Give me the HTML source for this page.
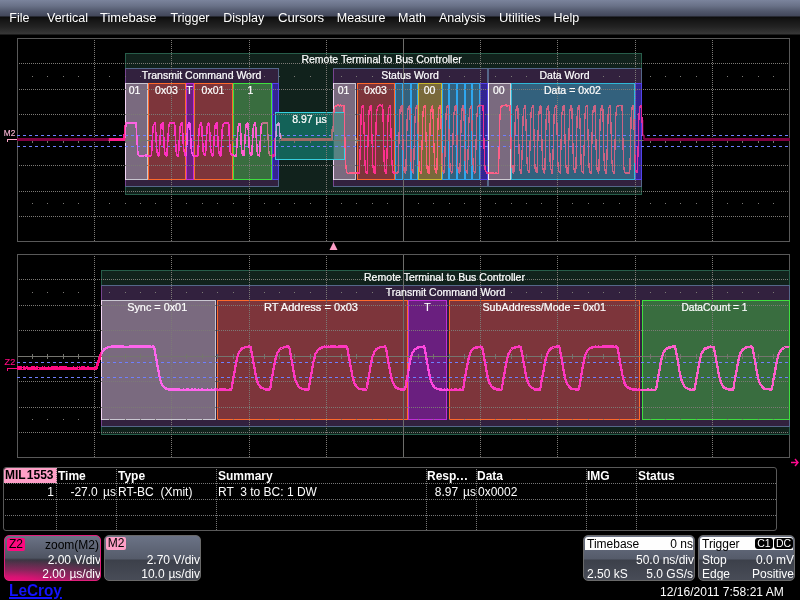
<!DOCTYPE html>
<html><head><meta charset="utf-8"><title>MIL-1553 decode</title>
<style>
html,body{margin:0;padding:0;background:#000;}
body{width:800px;height:600px;overflow:hidden;position:relative;font-family:"Liberation Sans", Arial, sans-serif;color:#fff;}
#all{position:absolute;left:0;top:0;width:800px;height:600px;will-change:transform;opacity:0.999;}
#menu{position:absolute;left:0;top:0;width:800px;height:35px;
 background:linear-gradient(to bottom,#7c859d 0px,#6a7288 6px,#535a6e 11px,#42475a 16.4px,#0d0d0d 16.6px,#161616 20px,#242424 27px,#3a3a3a 34.4px,#000 34.6px);}
#menu span{position:absolute;top:9.5px;font-size:12.5px;line-height:16px;color:#fff;white-space:nowrap;transform-origin:0 50%;}
#scope{position:absolute;left:0;top:0;width:800px;height:600px;}
#scope text{font-family:"Liberation Sans", Arial, sans-serif;}
#scope text.w{stroke:#fff;stroke-width:0.22px;}
#tbl{position:absolute;left:3px;top:467px;width:772px;height:62px;border:1px solid #5a5a5a;border-radius:3px;}
#tbl .h{position:absolute;top:1px;font-weight:bold;font-size:12px;line-height:14px;white-space:nowrap;}
#tbl .c{position:absolute;top:17px;font-size:12px;line-height:14px;white-space:pre;}
#tbl .vs{position:absolute;top:1px;width:1px;height:61px;background:repeating-linear-gradient(to bottom,#777 0 1px,transparent 1px 2px);}
#tbl .hs{position:absolute;left:1px;width:771px;height:1px;background:repeating-linear-gradient(to right,#777 0 1px,transparent 1px 2px);}
#mil{position:absolute;left:0;top:0;width:53px;height:15px;background:#ffa0c8;color:#000;font-weight:bold;font-size:12px;line-height:15px;border-top-left-radius:3px;white-space:nowrap;}
.box{position:absolute;top:535px;height:44px;border:1px solid #6a6a6a;border-radius:5px;overflow:hidden;font-size:12px;}
.box div{position:absolute;white-space:nowrap;line-height:14px;}
.r{text-align:right;}
#date{position:absolute;left:659.5px;top:584.5px;font-size:12px;line-height:14px;white-space:nowrap;transform:scaleX(1.005);transform-origin:0 0;}
#logo{position:absolute;left:8.8px;top:581.6px;font-size:16.6px;line-height:18px;font-weight:bold;color:#1414ff;text-decoration:underline;text-decoration-thickness:1.6px;text-underline-offset:1.2px;transform:scaleX(0.925);transform-origin:0 0;}
</style></head><body><div id="all">
<div id="menu"><span style="left:9.3px">File</span><span style="left:47px">Vertical</span><span style="left:100px;transform:scaleX(1.04)">Timebase</span><span style="left:170.4px">Trigger</span><span style="left:223.2px">Display</span><span style="left:277.6px;transform:scaleX(1.055)">Cursors</span><span style="left:336.8px">Measure</span><span style="left:398.1px">Math</span><span style="left:439px">Analysis</span><span style="left:498.8px;transform:scaleX(1.035)">Utilities</span><span style="left:553.6px">Help</span></div>
<svg id="scope" width="800" height="600" viewBox="0 0 800 600">
<g shape-rendering="crispEdges">
<rect x="17.5" y="38.5" width="772" height="203" fill="none" stroke="#5a5a5a" />
<rect x="125.5" y="53.5" width="516" height="141" fill="#12231d" stroke="#285e4b" />
<rect x="125.5" y="68.5" width="153" height="118" fill="#33223f" stroke="#56688a" />
<path d="M125.5,69V186" fill="none" stroke="#784690"/>
<rect x="333.5" y="68.5" width="154" height="118" fill="#33223f" stroke="#56688a" />
<path d="M333.5,69V186" fill="none" stroke="#784690"/>
<rect x="488.5" y="68.5" width="153" height="118" fill="#33223f" stroke="#56688a" />
<rect x="125" y="83" width="23" height="97" fill="#7b6b80"/>
<path d="M126,83.5H147.5V179.5H126" fill="none" stroke="#cac8d2"/>
<path d="M125.5,83V180" fill="none" stroke="#f4d6f6"/>
<rect x="148.5" y="83.5" width="37" height="96" fill="#7e363c" stroke="#ff6a2c" />
<rect x="186.5" y="83.5" width="7" height="96" fill="#6b2080" stroke="#c030d8" />
<rect x="194.5" y="83.5" width="38" height="96" fill="#7e363c" stroke="#ff6a2c" />
<rect x="233.5" y="83.5" width="38" height="96" fill="#3a6e40" stroke="#40e040" />
<rect x="272.5" y="83.5" width="6" height="96" fill="#342692" stroke="#5444ec" />
<rect x="333" y="83" width="23" height="97" fill="#7b6b80"/>
<path d="M334,83.5H355.5V179.5H334" fill="none" stroke="#cac8d2"/>
<path d="M333.5,83V180" fill="none" stroke="#f4d6f6"/>
<rect x="357.5" y="83.5" width="37" height="96" fill="#7e363c" stroke="#ff6a2c" />
<rect x="395.5" y="83.5" width="7" height="96" fill="#34627e" stroke="#30a8f0" />
<rect x="403.5" y="83.5" width="7" height="96" fill="#34627e" stroke="#30a8f0" />
<rect x="411.5" y="83.5" width="6" height="96" fill="#34627e" stroke="#30a8f0" />
<rect x="418.5" y="83.5" width="23" height="96" fill="#7a6a3c" stroke="#c8b830" />
<rect x="442.5" y="83.5" width="6" height="96" fill="#34627e" stroke="#30a8f0" />
<rect x="449.5" y="83.5" width="7" height="96" fill="#34627e" stroke="#30a8f0" />
<rect x="457.5" y="83.5" width="7" height="96" fill="#34627e" stroke="#30a8f0" />
<rect x="465.5" y="83.5" width="6" height="96" fill="#34627e" stroke="#30a8f0" />
<rect x="472.5" y="83.5" width="7" height="96" fill="#34627e" stroke="#30a8f0" />
<rect x="480.5" y="83.5" width="7" height="96" fill="#342692" stroke="#5444ec" />
<rect x="488" y="83" width="23" height="97" fill="#7b6b80"/>
<path d="M489,83.5H510.5V179.5H489" fill="none" stroke="#d0ccd4"/>
<path d="M488.5,83V180" fill="none" stroke="#f4f0f6"/>
<rect x="511.5" y="83.5" width="123" height="96" fill="#34627e" stroke="#30b8d8" />
<rect x="635.5" y="83.5" width="6" height="96" fill="#342692" stroke="#5444ec" />
<rect x="275.5" y="112.5" width="69" height="47" fill="#14685e" stroke="#38d0e0" fill-opacity="0.93"/>
<rect x="334" y="113" width="10" height="46" fill="#8a9aa4" fill-opacity="0.55"/>
<g>
<line x1="94.5" y1="40" x2="94.5" y2="241" stroke="#7d7b77" stroke-dasharray="1,1" />
<line x1="171.5" y1="40" x2="171.5" y2="241" stroke="#7d7b77" stroke-dasharray="1,1" />
<line x1="249.5" y1="40" x2="249.5" y2="241" stroke="#7d7b77" stroke-dasharray="1,1" />
<line x1="326.5" y1="40" x2="326.5" y2="241" stroke="#7d7b77" stroke-dasharray="1,1" />
<line x1="480.5" y1="40" x2="480.5" y2="241" stroke="#7d7b77" stroke-dasharray="1,1" />
<line x1="557.5" y1="40" x2="557.5" y2="241" stroke="#7d7b77" stroke-dasharray="1,1" />
<line x1="635.5" y1="40" x2="635.5" y2="241" stroke="#7d7b77" stroke-dasharray="1,1" />
<line x1="712.5" y1="40" x2="712.5" y2="241" stroke="#7d7b77" stroke-dasharray="1,1" />
<line x1="19" y1="63.5" x2="789" y2="63.5" stroke="#7d7b77" stroke-dasharray="1,1" />
<line x1="19" y1="89.5" x2="789" y2="89.5" stroke="#7d7b77" stroke-dasharray="1,1" />
<line x1="19" y1="114.5" x2="789" y2="114.5" stroke="#7d7b77" stroke-dasharray="1,1" />
<line x1="19" y1="165.5" x2="789" y2="165.5" stroke="#7d7b77" stroke-dasharray="1,1" />
<line x1="19" y1="191.5" x2="789" y2="191.5" stroke="#7d7b77" stroke-dasharray="1,1" />
<line x1="19" y1="216.5" x2="789" y2="216.5" stroke="#7d7b77" stroke-dasharray="1,1" />
</g>
<line x1="403.5" y1="39" x2="403.5" y2="241" stroke="#6e6e6b" />
<line x1="18" y1="140.5" x2="789" y2="140.5" stroke="#767670" />
<line x1="32.5" y1="138" x2="32.5" y2="143" stroke="#767670" />
<line x1="47.5" y1="138" x2="47.5" y2="143" stroke="#767670" />
<line x1="63.5" y1="138" x2="63.5" y2="143" stroke="#767670" />
<line x1="78.5" y1="138" x2="78.5" y2="143" stroke="#767670" />
<line x1="109.5" y1="138" x2="109.5" y2="143" stroke="#767670" />
<line x1="125.5" y1="138" x2="125.5" y2="143" stroke="#767670" />
<line x1="140.5" y1="138" x2="140.5" y2="143" stroke="#767670" />
<line x1="155.5" y1="138" x2="155.5" y2="143" stroke="#767670" />
<line x1="186.5" y1="138" x2="186.5" y2="143" stroke="#767670" />
<line x1="202.5" y1="138" x2="202.5" y2="143" stroke="#767670" />
<line x1="217.5" y1="138" x2="217.5" y2="143" stroke="#767670" />
<line x1="233.5" y1="138" x2="233.5" y2="143" stroke="#767670" />
<line x1="264.5" y1="138" x2="264.5" y2="143" stroke="#767670" />
<line x1="279.5" y1="138" x2="279.5" y2="143" stroke="#767670" />
<line x1="294.5" y1="138" x2="294.5" y2="143" stroke="#767670" />
<line x1="310.5" y1="138" x2="310.5" y2="143" stroke="#767670" />
<line x1="341.5" y1="138" x2="341.5" y2="143" stroke="#767670" />
<line x1="356.5" y1="138" x2="356.5" y2="143" stroke="#767670" />
<line x1="372.5" y1="138" x2="372.5" y2="143" stroke="#767670" />
<line x1="387.5" y1="138" x2="387.5" y2="143" stroke="#767670" />
<line x1="418.5" y1="138" x2="418.5" y2="143" stroke="#767670" />
<line x1="433.5" y1="138" x2="433.5" y2="143" stroke="#767670" />
<line x1="449.5" y1="138" x2="449.5" y2="143" stroke="#767670" />
<line x1="464.5" y1="138" x2="464.5" y2="143" stroke="#767670" />
<line x1="495.5" y1="138" x2="495.5" y2="143" stroke="#767670" />
<line x1="511.5" y1="138" x2="511.5" y2="143" stroke="#767670" />
<line x1="526.5" y1="138" x2="526.5" y2="143" stroke="#767670" />
<line x1="541.5" y1="138" x2="541.5" y2="143" stroke="#767670" />
<line x1="572.5" y1="138" x2="572.5" y2="143" stroke="#767670" />
<line x1="588.5" y1="138" x2="588.5" y2="143" stroke="#767670" />
<line x1="603.5" y1="138" x2="603.5" y2="143" stroke="#767670" />
<line x1="619.5" y1="138" x2="619.5" y2="143" stroke="#767670" />
<line x1="650.5" y1="138" x2="650.5" y2="143" stroke="#767670" />
<line x1="665.5" y1="138" x2="665.5" y2="143" stroke="#767670" />
<line x1="680.5" y1="138" x2="680.5" y2="143" stroke="#767670" />
<line x1="696.5" y1="138" x2="696.5" y2="143" stroke="#767670" />
<line x1="727.5" y1="138" x2="727.5" y2="143" stroke="#767670" />
<line x1="742.5" y1="138" x2="742.5" y2="143" stroke="#767670" />
<line x1="758.5" y1="138" x2="758.5" y2="143" stroke="#767670" />
<line x1="773.5" y1="138" x2="773.5" y2="143" stroke="#767670" />
<rect x="32" y="76" width="1" height="1" fill="#7c7a76"/>
<rect x="47" y="76" width="1" height="1" fill="#7c7a76"/>
<rect x="63" y="76" width="1" height="1" fill="#7c7a76"/>
<rect x="78" y="76" width="1" height="1" fill="#7c7a76"/>
<rect x="109" y="76" width="1" height="1" fill="#7c7a76"/>
<rect x="125" y="76" width="1" height="1" fill="#7c7a76"/>
<rect x="140" y="76" width="1" height="1" fill="#7c7a76"/>
<rect x="155" y="76" width="1" height="1" fill="#7c7a76"/>
<rect x="186" y="76" width="1" height="1" fill="#7c7a76"/>
<rect x="202" y="76" width="1" height="1" fill="#7c7a76"/>
<rect x="217" y="76" width="1" height="1" fill="#7c7a76"/>
<rect x="233" y="76" width="1" height="1" fill="#7c7a76"/>
<rect x="264" y="76" width="1" height="1" fill="#7c7a76"/>
<rect x="279" y="76" width="1" height="1" fill="#7c7a76"/>
<rect x="294" y="76" width="1" height="1" fill="#7c7a76"/>
<rect x="310" y="76" width="1" height="1" fill="#7c7a76"/>
<rect x="341" y="76" width="1" height="1" fill="#7c7a76"/>
<rect x="356" y="76" width="1" height="1" fill="#7c7a76"/>
<rect x="372" y="76" width="1" height="1" fill="#7c7a76"/>
<rect x="387" y="76" width="1" height="1" fill="#7c7a76"/>
<rect x="418" y="76" width="1" height="1" fill="#7c7a76"/>
<rect x="433" y="76" width="1" height="1" fill="#7c7a76"/>
<rect x="449" y="76" width="1" height="1" fill="#7c7a76"/>
<rect x="464" y="76" width="1" height="1" fill="#7c7a76"/>
<rect x="495" y="76" width="1" height="1" fill="#7c7a76"/>
<rect x="511" y="76" width="1" height="1" fill="#7c7a76"/>
<rect x="526" y="76" width="1" height="1" fill="#7c7a76"/>
<rect x="541" y="76" width="1" height="1" fill="#7c7a76"/>
<rect x="572" y="76" width="1" height="1" fill="#7c7a76"/>
<rect x="588" y="76" width="1" height="1" fill="#7c7a76"/>
<rect x="603" y="76" width="1" height="1" fill="#7c7a76"/>
<rect x="619" y="76" width="1" height="1" fill="#7c7a76"/>
<rect x="650" y="76" width="1" height="1" fill="#7c7a76"/>
<rect x="665" y="76" width="1" height="1" fill="#7c7a76"/>
<rect x="680" y="76" width="1" height="1" fill="#7c7a76"/>
<rect x="696" y="76" width="1" height="1" fill="#7c7a76"/>
<rect x="727" y="76" width="1" height="1" fill="#7c7a76"/>
<rect x="742" y="76" width="1" height="1" fill="#7c7a76"/>
<rect x="758" y="76" width="1" height="1" fill="#7c7a76"/>
<rect x="773" y="76" width="1" height="1" fill="#7c7a76"/>
<rect x="32" y="203" width="1" height="1" fill="#7c7a76"/>
<rect x="47" y="203" width="1" height="1" fill="#7c7a76"/>
<rect x="63" y="203" width="1" height="1" fill="#7c7a76"/>
<rect x="78" y="203" width="1" height="1" fill="#7c7a76"/>
<rect x="109" y="203" width="1" height="1" fill="#7c7a76"/>
<rect x="125" y="203" width="1" height="1" fill="#7c7a76"/>
<rect x="140" y="203" width="1" height="1" fill="#7c7a76"/>
<rect x="155" y="203" width="1" height="1" fill="#7c7a76"/>
<rect x="186" y="203" width="1" height="1" fill="#7c7a76"/>
<rect x="202" y="203" width="1" height="1" fill="#7c7a76"/>
<rect x="217" y="203" width="1" height="1" fill="#7c7a76"/>
<rect x="233" y="203" width="1" height="1" fill="#7c7a76"/>
<rect x="264" y="203" width="1" height="1" fill="#7c7a76"/>
<rect x="279" y="203" width="1" height="1" fill="#7c7a76"/>
<rect x="294" y="203" width="1" height="1" fill="#7c7a76"/>
<rect x="310" y="203" width="1" height="1" fill="#7c7a76"/>
<rect x="341" y="203" width="1" height="1" fill="#7c7a76"/>
<rect x="356" y="203" width="1" height="1" fill="#7c7a76"/>
<rect x="372" y="203" width="1" height="1" fill="#7c7a76"/>
<rect x="387" y="203" width="1" height="1" fill="#7c7a76"/>
<rect x="418" y="203" width="1" height="1" fill="#7c7a76"/>
<rect x="433" y="203" width="1" height="1" fill="#7c7a76"/>
<rect x="449" y="203" width="1" height="1" fill="#7c7a76"/>
<rect x="464" y="203" width="1" height="1" fill="#7c7a76"/>
<rect x="495" y="203" width="1" height="1" fill="#7c7a76"/>
<rect x="511" y="203" width="1" height="1" fill="#7c7a76"/>
<rect x="526" y="203" width="1" height="1" fill="#7c7a76"/>
<rect x="541" y="203" width="1" height="1" fill="#7c7a76"/>
<rect x="572" y="203" width="1" height="1" fill="#7c7a76"/>
<rect x="588" y="203" width="1" height="1" fill="#7c7a76"/>
<rect x="603" y="203" width="1" height="1" fill="#7c7a76"/>
<rect x="619" y="203" width="1" height="1" fill="#7c7a76"/>
<rect x="650" y="203" width="1" height="1" fill="#7c7a76"/>
<rect x="665" y="203" width="1" height="1" fill="#7c7a76"/>
<rect x="680" y="203" width="1" height="1" fill="#7c7a76"/>
<rect x="696" y="203" width="1" height="1" fill="#7c7a76"/>
<rect x="727" y="203" width="1" height="1" fill="#7c7a76"/>
<rect x="742" y="203" width="1" height="1" fill="#7c7a76"/>
<rect x="758" y="203" width="1" height="1" fill="#7c7a76"/>
<rect x="773" y="203" width="1" height="1" fill="#7c7a76"/>
<line x1="17" y1="135.5" x2="789" y2="135.5" stroke="#7080ff" stroke-dasharray="3,3" />
<line x1="17" y1="146.5" x2="789" y2="146.5" stroke="#7080ff" stroke-dasharray="3,3" />
</g>
<defs><path id="wt" d="M17.0,139.4L124.2,139.4L125.0,133.8L126.0,124.9L126.5,123.5L126.8,123.6L127.0,123.0L127.2,122.9L127.8,123.6L128.0,122.8L128.2,122.8L128.8,123.6L129.2,123.0L129.5,123.6L129.8,122.6L130.0,123.5L130.2,122.9L130.8,122.7L131.2,123.4L131.5,122.7L131.8,123.2L132.0,123.3L132.2,123.0L132.5,123.2L132.8,122.6L133.2,122.8L133.5,123.3L134.0,122.9L134.2,123.2L134.8,122.9L135.0,123.4L135.2,123.3L135.5,122.8L135.8,123.2L136.0,123.1L137.8,152.8L138.2,154.3L138.5,154.3L138.8,155.3L139.0,155.6L139.2,155.5L139.5,156.0L139.8,155.4L140.0,155.8L140.8,155.6L141.2,156.2L141.5,155.7L141.8,155.9L142.0,155.2L142.2,155.9L142.5,155.9L142.8,156.2L143.2,155.5L143.8,155.9L144.0,155.2L144.2,155.7L145.0,155.2L145.2,156.0L145.5,155.3L146.0,155.6L146.2,156.1L146.5,155.2L147.2,156.1L147.8,156.1L148.0,155.5L148.5,155.5L148.8,156.1L149.0,156.2L149.2,155.3L150.0,155.4L150.5,155.8L151.0,155.2L151.2,155.6L151.5,154.7L153.0,127.7L153.5,124.5L153.8,124.8L154.0,124.2L154.5,123.8L154.8,123.2L155.2,122.8L156.8,150.1L157.5,153.8L158.0,154.9L158.2,154.8L158.5,155.8L159.0,155.2L159.2,153.7L160.8,127.2L161.2,124.4L162.0,123.3L162.2,123.8L162.5,122.9L162.8,122.7L163.0,123.7L164.5,151.1L165.0,153.8L165.5,154.7L165.8,154.7L166.0,155.6L166.2,155.5L166.5,155.8L166.8,155.4L168.8,125.4L169.5,123.3L169.8,123.0L170.0,123.2L170.2,123.0L170.8,123.7L171.0,123.1L171.2,123.6L171.8,123.6L172.0,123.0L173.0,122.8L173.5,123.5L173.8,123.5L174.0,123.1L174.5,123.4L174.8,125.1L176.0,149.8L176.5,153.6L176.8,153.9L177.2,155.5L177.5,155.2L177.8,155.3L178.0,156.0L178.5,155.2L180.0,127.5L181.0,123.8L181.2,123.7L181.8,122.8L182.0,123.8L182.2,123.4L183.5,147.4L184.8,154.8L185.0,154.8L185.2,155.2L185.5,155.0L185.8,156.0L186.2,154.7L187.5,129.8L188.2,124.4L189.0,123.0L189.2,123.8L189.5,123.0L190.0,123.4L191.2,147.9L191.8,152.3L192.5,155.0L193.5,156.0L193.8,155.5L194.0,155.8L194.5,155.7L194.8,155.9L195.0,155.6L195.5,155.7L195.8,156.2L196.0,155.9L196.5,156.2L196.8,155.4L197.2,156.2L197.5,156.1L197.8,155.3L199.0,130.3L200.0,124.2L200.2,124.2L200.8,123.1L201.0,123.8L201.2,123.8L201.5,122.9L203.2,151.7L203.8,153.9L204.5,155.5L204.8,154.9L205.0,155.6L205.2,155.5L205.5,155.0L207.0,128.2L207.5,124.7L208.0,123.4L208.2,124.0L208.8,122.9L209.2,123.7L210.8,150.1L211.5,154.3L211.8,154.6L212.0,154.5L212.2,155.7L212.5,155.6L212.8,155.8L213.0,155.1L213.2,155.1L214.8,127.6L215.5,124.0L215.8,123.9L216.2,123.0L216.8,122.8L217.0,122.9L218.5,149.9L219.2,153.9L219.5,154.2L219.8,155.3L220.0,155.4L220.2,155.1L220.8,156.1L222.2,129.7L222.8,126.1L223.2,124.1L223.5,124.3L224.8,122.7L225.2,122.7L225.5,123.4L225.8,122.8L226.2,122.6L226.5,123.5L227.0,123.3L227.2,122.9L228.0,123.1L228.2,122.7L228.5,123.0L228.8,124.5L230.0,150.0L230.5,152.9L231.5,155.2L231.8,155.1L232.0,155.5L232.2,155.0L232.5,155.4L232.8,155.2L233.0,155.6L233.2,155.2L233.5,155.2L233.8,155.5L234.0,155.4L234.2,155.8L234.5,155.7L234.8,156.0L235.2,155.9L235.5,156.1L235.8,155.6L236.0,155.5L236.2,156.2L238.0,127.2L238.8,123.8L239.2,123.6L239.5,123.8L240.2,123.3L241.5,148.3L242.2,153.5L242.8,155.2L243.0,155.2L243.8,155.7L244.0,155.6L245.8,126.3L246.0,125.8L246.5,123.7L246.8,123.5L247.0,123.8L247.2,123.0L248.0,124.0L249.5,151.4L249.8,152.9L250.8,155.4L251.0,155.2L251.2,155.6L251.5,155.0L251.8,155.1L253.2,128.6L254.0,124.2L254.2,124.5L254.5,123.4L254.8,124.0L255.0,123.9L255.2,122.7L255.5,123.2L257.0,149.5L257.5,153.0L258.2,155.5L258.5,154.8L258.8,155.7L259.0,155.5L259.2,156.0L259.5,155.8L261.0,128.2L261.8,124.1L262.2,123.5L262.5,123.9L262.8,122.8L263.0,123.5L263.2,123.6L263.5,122.7L263.8,123.6L264.0,123.4L264.2,123.6L264.5,122.9L265.0,123.0L265.2,123.7L265.8,122.9L266.2,122.9L266.5,122.6L266.8,122.7L267.0,123.5L267.2,122.9L268.8,150.8L269.2,154.1L270.2,155.8L270.5,155.5L270.8,155.8L271.0,155.1L271.2,155.9L271.5,155.6L271.8,155.9L272.5,155.2L272.8,156.2L273.0,155.3L273.2,155.7L273.8,155.5L274.2,156.2L274.5,155.4L274.8,155.9L275.0,155.4L276.2,129.9L277.2,124.1L277.5,124.4L277.8,124.2L278.2,122.9L278.8,122.7L280.2,136.9L280.5,137.8L281.0,138.5L281.2,139.4L332.5,139.4L333.8,113.3L334.2,108.7L335.2,105.8L335.8,105.5L336.2,105.5L336.5,106.1L337.0,105.9L337.2,105.0L337.5,105.0L337.8,105.7L338.0,105.9L338.2,105.5L338.5,105.6L338.8,104.9L339.2,106.0L340.0,106.0L340.2,105.2L340.8,105.1L341.5,106.0L342.0,105.7L342.2,105.8L342.5,105.4L342.8,105.6L343.0,105.0L343.2,105.8L343.5,105.2L343.8,106.0L344.0,105.7L345.5,160.6L346.2,169.9L347.0,172.5L347.2,172.2L348.0,173.6L348.2,173.4L348.5,173.7L349.0,173.0L349.2,173.0L349.5,173.8L350.2,172.8L350.8,173.5L351.2,173.0L351.8,173.8L352.0,173.0L352.2,172.8L353.0,173.5L353.2,173.0L353.5,173.6L354.2,173.0L354.5,173.8L354.8,173.1L355.0,173.7L355.2,173.0L355.5,173.0L355.8,173.6L356.0,173.1L356.2,173.8L356.8,173.0L357.8,173.8L358.0,172.9L358.2,173.2L358.5,173.0L358.8,173.8L359.0,172.9L359.5,172.8L361.2,112.5L362.2,106.3L362.5,106.5L363.2,105.5L363.5,108.5L365.0,165.0L365.8,171.3L366.0,172.1L366.5,172.2L366.8,172.8L367.0,172.9L367.2,173.6L368.5,121.5L369.2,109.5L369.8,106.9L370.0,107.2L370.2,106.0L370.8,106.3L371.0,105.5L372.8,164.8L373.5,171.4L374.0,172.8L374.2,172.2L375.0,173.6L376.2,120.4L377.0,109.4L378.5,105.6L379.0,105.5L379.2,105.9L379.5,105.1L379.8,105.2L380.0,105.8L380.5,105.0L380.8,105.0L381.0,105.6L381.2,105.3L381.5,106.0L382.0,106.0L382.2,105.2L382.5,105.0L382.8,106.5L384.2,163.8L385.2,172.0L385.5,172.4L385.8,172.2L386.0,173.2L386.2,172.8L386.5,173.2L388.0,116.6L388.8,108.5L389.0,107.4L389.2,107.4L389.8,105.8L390.0,106.2L390.2,105.9L391.8,159.7L392.5,169.2L393.0,172.2L393.2,172.4L393.5,173.1L393.8,172.7L394.0,173.4L394.5,172.9L395.0,173.7L395.2,172.8L395.5,173.4L395.8,173.4L396.0,173.0L396.2,173.2L396.5,172.9L397.0,173.0L397.2,173.4L397.5,173.5L398.0,172.8L398.2,169.9L399.5,119.0L400.2,108.8L401.2,105.7L401.5,105.5L401.8,106.0L402.0,105.6L403.5,163.1L404.2,171.0L404.8,171.8L405.0,172.8L405.5,172.4L405.8,173.5L407.2,117.4L408.0,109.1L408.5,106.5L408.8,106.5L409.0,106.0L409.2,105.9L409.5,105.4L409.8,105.4L411.2,163.6L411.5,167.5L412.5,172.7L413.0,172.3L413.2,173.5L413.5,173.0L415.0,117.5L416.0,107.3L417.2,105.3L417.5,106.9L418.8,159.5L419.2,167.8L420.2,172.3L421.0,173.1L421.2,173.0L423.0,112.4L424.0,106.4L424.2,106.3L424.5,105.6L424.8,105.4L425.0,105.7L425.2,108.4L426.8,164.8L427.2,169.6L427.8,171.8L428.2,173.1L428.5,172.5L428.8,173.4L429.0,173.7L430.2,121.5L431.0,109.7L431.8,106.3L432.0,106.1L432.2,106.3L432.5,105.5L432.8,106.2L434.5,164.8L435.0,169.6L436.0,173.1L436.2,173.1L436.5,173.5L436.8,172.8L438.2,116.0L438.8,109.8L439.2,106.8L439.5,107.2L440.0,105.9L440.2,106.1L440.5,105.4L442.2,165.3L442.8,170.2L443.5,172.9L443.8,172.8L444.0,173.1L444.2,172.8L444.5,171.1L446.0,114.9L446.8,107.8L447.0,107.4L447.2,106.1L447.5,105.7L447.8,105.8L448.0,105.4L448.2,105.5L449.8,161.8L450.2,168.9L451.5,173.1L451.8,173.3L452.0,173.0L452.2,171.4L453.5,119.7L454.5,107.7L454.8,107.6L455.0,106.0L455.2,106.2L456.0,105.2L457.8,166.2L458.5,171.6L458.8,171.7L459.2,172.5L459.5,172.4L459.8,173.5L460.0,170.3L461.2,118.6L462.2,107.4L462.8,106.0L463.0,106.0L463.2,106.2L463.5,106.0L463.8,106.1L465.2,162.6L466.0,171.0L466.2,171.1L466.5,172.5L466.8,172.0L467.0,172.5L467.2,172.7L467.5,173.4L469.0,118.4L469.8,109.2L470.5,106.4L470.8,106.5L471.0,106.1L471.2,106.1L471.5,105.6L473.0,163.4L473.5,169.5L474.2,171.7L474.5,173.0L474.8,172.6L475.2,172.6L476.8,117.3L477.5,109.1L478.2,105.9L478.5,106.5L479.0,106.2L479.2,105.2L480.0,105.0L480.2,105.9L480.8,105.7L481.0,105.9L481.8,105.1L482.0,105.1L482.2,105.8L482.5,105.2L483.0,105.4L484.5,161.6L485.2,170.4L485.5,171.4L485.8,171.4L486.5,173.2L486.8,172.9L487.0,173.4L487.5,172.9L487.8,173.7L488.0,172.8L488.2,173.6L488.5,172.9L488.8,172.7L489.5,173.8L489.8,172.8L490.0,173.3L490.2,173.3L490.5,173.6L490.8,173.0L491.0,173.3L491.2,173.1L491.5,173.7L491.8,173.0L492.0,173.8L492.2,173.1L492.5,173.0L492.8,173.5L493.2,172.9L493.5,173.5L493.8,172.8L494.0,173.6L494.8,173.4L495.0,173.1L495.5,173.2L495.8,173.7L496.0,172.8L496.2,173.7L496.5,172.8L497.0,173.0L497.2,173.7L497.8,173.2L498.0,173.7L498.2,173.0L498.5,173.3L500.0,115.4L500.8,108.5L501.2,106.3L501.8,106.3L502.2,105.3L502.8,106.0L503.0,105.3L503.5,105.3L504.0,105.9L504.2,105.1L505.2,105.5L505.5,105.1L505.8,105.3L506.0,105.2L506.2,106.0L506.8,105.1L507.0,106.0L507.2,105.1L507.8,106.0L508.8,105.2L509.0,105.6L509.2,105.1L509.8,105.4L510.0,105.0L511.5,161.0L512.5,171.4L512.8,172.4L513.0,172.3L513.5,173.2L513.8,173.0L514.0,171.4L515.2,119.9L516.0,109.4L516.8,106.2L517.2,106.3L517.8,105.8L519.5,166.6L520.2,171.6L521.0,173.3L521.2,172.4L521.5,173.1L523.2,114.4L524.0,108.1L524.8,106.1L525.0,106.4L525.2,105.5L525.5,105.9L527.0,162.1L527.5,168.7L528.5,172.7L529.2,172.8L531.0,113.4L532.0,107.1L532.8,105.6L533.0,106.3L533.2,105.5L534.8,163.3L535.2,169.4L535.8,171.9L536.0,171.9L536.2,172.4L536.8,172.9L537.0,172.7L538.5,117.8L539.5,107.5L539.8,107.4L540.2,105.6L540.5,106.2L540.8,106.2L541.0,107.5L542.5,163.3L543.0,169.2L544.2,173.1L544.8,172.7L546.2,117.3L547.0,109.1L547.5,106.5L547.8,106.6L548.0,106.1L548.2,106.1L548.5,105.7L548.8,107.6L550.0,159.2L550.5,167.4L551.8,173.0L552.0,172.3L552.2,173.4L552.5,173.1L554.2,112.2L555.0,107.0L555.8,106.5L556.0,105.7L556.2,106.3L556.5,108.8L557.8,160.3L558.2,168.2L559.2,172.6L559.5,172.3L560.2,173.2L561.8,116.0L562.5,108.5L563.2,106.1L563.5,105.8L564.0,105.9L565.8,164.8L566.5,171.4L567.5,173.3L567.8,173.2L568.0,173.3L569.5,115.2L570.0,109.7L570.5,106.8L571.0,105.7L571.2,106.3L571.5,106.3L571.8,105.9L573.5,165.5L574.5,172.4L574.8,171.9L575.0,172.8L575.2,172.4L575.5,172.6L575.8,172.0L577.2,114.8L578.2,107.1L578.8,105.8L579.0,106.1L579.2,105.5L579.5,105.3L581.2,166.0L582.0,171.5L582.2,171.7L582.5,172.7L582.8,172.4L583.0,172.5L583.2,173.4L583.5,170.2L585.0,114.3L585.5,108.9L586.2,106.0L586.5,105.7L586.8,106.1L587.0,106.1L587.2,105.2L588.8,162.1L589.2,168.9L589.8,171.6L590.0,171.6L590.2,172.8L590.5,172.6L590.8,173.1L591.0,173.2L591.2,169.9L592.5,118.7L593.0,110.5L594.0,106.3L594.5,106.4L595.0,105.8L596.5,163.3L597.0,169.1L598.5,173.3L598.8,173.5L600.2,117.5L601.0,109.2L601.8,106.0L602.2,106.2L602.5,105.4L602.8,105.9L604.0,158.5L605.0,170.9L605.5,172.1L605.8,172.1L606.0,173.2L606.2,173.3L606.5,172.8L608.2,112.9L608.8,108.4L609.2,106.7L609.8,106.0L610.0,105.9L610.2,105.4L610.5,106.6L611.8,159.6L612.8,170.7L613.2,171.7L613.5,173.1L613.8,173.2L614.0,173.0L614.2,173.2L615.8,117.3L616.5,108.0L617.5,105.5L618.0,106.1L618.2,105.6L618.5,106.1L618.8,106.0L619.0,105.1L619.2,105.6L619.8,105.1L620.0,106.0L620.2,105.2L621.0,106.0L621.5,105.4L621.8,105.4L622.0,105.1L623.5,162.4L624.0,169.2L624.2,170.6L624.5,170.9L624.8,172.3L625.5,173.5L625.8,172.6L626.0,172.8L626.5,173.7L627.0,173.1L627.5,173.6L627.8,172.9L628.0,173.1L628.5,172.9L628.8,173.3L629.0,172.9L629.5,172.9L629.8,173.5L631.2,115.3L632.2,106.9L632.5,106.6L632.8,105.8L633.0,106.5L633.5,105.8L635.0,160.6L635.8,170.1L636.0,171.2L636.2,171.5L636.5,172.8L636.8,172.4L637.0,172.8L637.2,172.7L637.5,171.4L639.0,114.7L639.5,109.3L639.8,108.7L640.0,106.8L640.2,107.0L640.8,105.6L641.0,105.8L641.2,105.5L642.8,134.1L643.5,138.2L643.8,137.9L644.2,139.4L789.5,139.4" fill="none" stroke-linejoin="round" shape-rendering="crispEdges"/></defs>
<clipPath id="ct0"><rect x="17" y="39" width="91.6" height="202"/></clipPath>
<use href="#wt" clip-path="url(#ct0)" stroke="#80003f" stroke-width="3"/>
<clipPath id="ct1"><rect x="108.6" y="39" width="16.900000000000006" height="202"/></clipPath>
<use href="#wt" clip-path="url(#ct1)" stroke="#ff1a8c" stroke-width="3"/>
<clipPath id="ct2"><rect x="125.5" y="39" width="22.0" height="202"/></clipPath>
<use href="#wt" clip-path="url(#ct2)" stroke="#ff64e4" stroke-width="1.6"/>
<clipPath id="ct3"><rect x="147.5" y="39" width="38.5" height="202"/></clipPath>
<use href="#wt" clip-path="url(#ct3)" stroke="#ff30c0" stroke-width="1.6"/>
<clipPath id="ct4"><rect x="186" y="39" width="8" height="202"/></clipPath>
<use href="#wt" clip-path="url(#ct4)" stroke="#ff50e8" stroke-width="1.6"/>
<clipPath id="ct5"><rect x="194" y="39" width="39" height="202"/></clipPath>
<use href="#wt" clip-path="url(#ct5)" stroke="#ff30c0" stroke-width="1.6"/>
<clipPath id="ct6"><rect x="233" y="39" width="29.5" height="202"/></clipPath>
<use href="#wt" clip-path="url(#ct6)" stroke="#ff60d0" stroke-width="1.6"/>
<clipPath id="ct7"><rect x="262.5" y="39" width="9.5" height="202"/></clipPath>
<use href="#wt" clip-path="url(#ct7)" stroke="#c07888" stroke-width="1.3"/>
<clipPath id="ct8"><rect x="272" y="39" width="3.1999999999999886" height="202"/></clipPath>
<use href="#wt" clip-path="url(#ct8)" stroke="#e020a0" stroke-width="2.6"/>
<clipPath id="ct9"><rect x="275.2" y="39" width="5.800000000000011" height="202"/></clipPath>
<use href="#wt" clip-path="url(#ct9)" stroke="#cc98dc" stroke-width="1.3"/>
<clipPath id="ct10"><rect x="281" y="39" width="51.30000000000001" height="202"/></clipPath>
<use href="#wt" clip-path="url(#ct10)" stroke="#a06c66" stroke-width="3"/>
<clipPath id="ct11"><rect x="332.3" y="39" width="1.3000000000000114" height="202"/></clipPath>
<use href="#wt" clip-path="url(#ct11)" stroke="#d08090" stroke-width="1.3"/>
<clipPath id="ct12"><rect x="333.6" y="39" width="23.399999999999977" height="202"/></clipPath>
<use href="#wt" clip-path="url(#ct12)" stroke="#ff6088" stroke-width="1.3"/>
<clipPath id="ct13"><rect x="357" y="39" width="38" height="202"/></clipPath>
<use href="#wt" clip-path="url(#ct13)" stroke="#ff3090" stroke-width="1.3"/>
<clipPath id="ct14"><rect x="395" y="39" width="23.5" height="202"/></clipPath>
<use href="#wt" clip-path="url(#ct14)" stroke="#c86484" stroke-width="1.3"/>
<clipPath id="ct15"><rect x="418.5" y="39" width="23.19999999999999" height="202"/></clipPath>
<use href="#wt" clip-path="url(#ct15)" stroke="#ff6078" stroke-width="1.3"/>
<clipPath id="ct16"><rect x="441.7" y="39" width="38.60000000000002" height="202"/></clipPath>
<use href="#wt" clip-path="url(#ct16)" stroke="#c86484" stroke-width="1.3"/>
<clipPath id="ct17"><rect x="480.3" y="39" width="7.699999999999989" height="202"/></clipPath>
<use href="#wt" clip-path="url(#ct17)" stroke="#e83098" stroke-width="1.3"/>
<clipPath id="ct18"><rect x="488" y="39" width="23" height="202"/></clipPath>
<use href="#wt" clip-path="url(#ct18)" stroke="#ff6088" stroke-width="1.3"/>
<clipPath id="ct19"><rect x="511" y="39" width="124" height="202"/></clipPath>
<use href="#wt" clip-path="url(#ct19)" stroke="#cc6484" stroke-width="1.3"/>
<clipPath id="ct20"><rect x="635" y="39" width="8.5" height="202"/></clipPath>
<use href="#wt" clip-path="url(#ct20)" stroke="#e030a0" stroke-width="1.3"/>
<clipPath id="ct21"><rect x="643.5" y="39" width="146.5" height="202"/></clipPath>
<use href="#wt" clip-path="url(#ct21)" stroke="#80003f" stroke-width="3"/>
<text class="w" x="381.6" y="63.3" font-size="10.5" fill="#fff" text-anchor="middle" >Remote Terminal to Bus Controller</text>
<text class="w" x="201.5" y="78.8" font-size="10.5" fill="#fff" text-anchor="middle" >Transmit Command Word</text>
<text class="w" x="410" y="78.8" font-size="10.5" fill="#fff" text-anchor="middle" >Status Word</text>
<text class="w" x="564.5" y="78.8" font-size="10.5" fill="#fff" text-anchor="middle" >Data Word</text>
<text class="w" x="134.5" y="94" font-size="10.5" fill="#fff" text-anchor="middle" >01</text>
<text class="w" x="166.5" y="94" font-size="10.5" fill="#fff" text-anchor="middle" >0x03</text>
<text class="w" x="189.5" y="94" font-size="10.5" fill="#fff" text-anchor="middle" >T</text>
<text class="w" x="213" y="94" font-size="10.5" fill="#fff" text-anchor="middle" >0x01</text>
<text class="w" x="250.5" y="94" font-size="10.5" fill="#fff" text-anchor="middle" >1</text>
<text class="w" x="343.5" y="94" font-size="10.5" fill="#fff" text-anchor="middle" >01</text>
<text class="w" x="375.5" y="94" font-size="10.5" fill="#fff" text-anchor="middle" >0x03</text>
<text class="w" x="429.5" y="94" font-size="10.5" fill="#fff" text-anchor="middle" >00</text>
<text class="w" x="498.8" y="94" font-size="10.5" fill="#fff" text-anchor="middle" >00</text>
<text class="w" x="572.5" y="94" font-size="10.5" fill="#fff" text-anchor="middle" >Data = 0x02</text>
<text class="w" x="309.5" y="123.2" font-size="10.5" fill="#fff" text-anchor="middle" >8.97 µs</text>
<text x="3.8" y="136" font-size="9.6" fill="#ffb8d8" text-anchor="start" textLength="11.4" lengthAdjust="spacingAndGlyphs" stroke="#ffb8d8" stroke-width="0.12">M2</text>
<path d="M7.5,141.5V139.5H17" stroke="#ffaacc" fill="none" shape-rendering="crispEdges"/>
<path d="M333.5,242L337.5,250H329.5Z" fill="#ffa0c8"/>
<g shape-rendering="crispEdges">
<rect x="17.5" y="254.5" width="772" height="203" fill="none" stroke="#5a5a5a" />
<clipPath id="cb"><rect x="18" y="255" width="772" height="202"/></clipPath>
<g clip-path="url(#cb)">
<rect x="101.5" y="270.5" width="688" height="164" fill="#12231d" stroke="#285e4b" />
<rect x="101.5" y="285.5" width="688" height="141" fill="#33223f" stroke="#56688a" />
<path d="M101.5,286V426" fill="none" stroke="#784690"/>
<rect x="101" y="300" width="115" height="120" fill="#7b6b80"/>
<path d="M102,300.5H215.5V419.5H102" fill="none" stroke="#cac8d2"/>
<path d="M101.5,300V420" fill="none" stroke="#f4d6f6"/>
<rect x="217.5" y="300.5" width="190" height="119" fill="#7e363c" stroke="#ff6a2c" />
<rect x="408.5" y="300.5" width="38" height="119" fill="#6b2080" stroke="#c030d8" />
<rect x="449.5" y="300.5" width="190" height="119" fill="#7e363c" stroke="#ff6a2c" />
<rect x="642.5" y="300.5" width="147" height="119" fill="#3a6e40" stroke="#40e040" />
</g>
<g>
<line x1="94.5" y1="256" x2="94.5" y2="457" stroke="#7d7b77" stroke-dasharray="1,1" />
<line x1="171.5" y1="256" x2="171.5" y2="457" stroke="#7d7b77" stroke-dasharray="1,1" />
<line x1="249.5" y1="256" x2="249.5" y2="457" stroke="#7d7b77" stroke-dasharray="1,1" />
<line x1="326.5" y1="256" x2="326.5" y2="457" stroke="#7d7b77" stroke-dasharray="1,1" />
<line x1="480.5" y1="256" x2="480.5" y2="457" stroke="#7d7b77" stroke-dasharray="1,1" />
<line x1="557.5" y1="256" x2="557.5" y2="457" stroke="#7d7b77" stroke-dasharray="1,1" />
<line x1="635.5" y1="256" x2="635.5" y2="457" stroke="#7d7b77" stroke-dasharray="1,1" />
<line x1="712.5" y1="256" x2="712.5" y2="457" stroke="#7d7b77" stroke-dasharray="1,1" />
<line x1="19" y1="279.5" x2="789" y2="279.5" stroke="#7d7b77" stroke-dasharray="1,1" />
<line x1="19" y1="305.5" x2="789" y2="305.5" stroke="#7d7b77" stroke-dasharray="1,1" />
<line x1="19" y1="330.5" x2="789" y2="330.5" stroke="#7d7b77" stroke-dasharray="1,1" />
<line x1="19" y1="381.5" x2="789" y2="381.5" stroke="#7d7b77" stroke-dasharray="1,1" />
<line x1="19" y1="407.5" x2="789" y2="407.5" stroke="#7d7b77" stroke-dasharray="1,1" />
<line x1="19" y1="432.5" x2="789" y2="432.5" stroke="#7d7b77" stroke-dasharray="1,1" />
</g>
<line x1="403.5" y1="255" x2="403.5" y2="457" stroke="#6e6e6b" />
<line x1="18" y1="356.5" x2="789" y2="356.5" stroke="#767670" />
<line x1="32.5" y1="354" x2="32.5" y2="359" stroke="#767670" />
<line x1="47.5" y1="354" x2="47.5" y2="359" stroke="#767670" />
<line x1="63.5" y1="354" x2="63.5" y2="359" stroke="#767670" />
<line x1="78.5" y1="354" x2="78.5" y2="359" stroke="#767670" />
<line x1="109.5" y1="354" x2="109.5" y2="359" stroke="#767670" />
<line x1="125.5" y1="354" x2="125.5" y2="359" stroke="#767670" />
<line x1="140.5" y1="354" x2="140.5" y2="359" stroke="#767670" />
<line x1="155.5" y1="354" x2="155.5" y2="359" stroke="#767670" />
<line x1="186.5" y1="354" x2="186.5" y2="359" stroke="#767670" />
<line x1="202.5" y1="354" x2="202.5" y2="359" stroke="#767670" />
<line x1="217.5" y1="354" x2="217.5" y2="359" stroke="#767670" />
<line x1="233.5" y1="354" x2="233.5" y2="359" stroke="#767670" />
<line x1="264.5" y1="354" x2="264.5" y2="359" stroke="#767670" />
<line x1="279.5" y1="354" x2="279.5" y2="359" stroke="#767670" />
<line x1="294.5" y1="354" x2="294.5" y2="359" stroke="#767670" />
<line x1="310.5" y1="354" x2="310.5" y2="359" stroke="#767670" />
<line x1="341.5" y1="354" x2="341.5" y2="359" stroke="#767670" />
<line x1="356.5" y1="354" x2="356.5" y2="359" stroke="#767670" />
<line x1="372.5" y1="354" x2="372.5" y2="359" stroke="#767670" />
<line x1="387.5" y1="354" x2="387.5" y2="359" stroke="#767670" />
<line x1="418.5" y1="354" x2="418.5" y2="359" stroke="#767670" />
<line x1="433.5" y1="354" x2="433.5" y2="359" stroke="#767670" />
<line x1="449.5" y1="354" x2="449.5" y2="359" stroke="#767670" />
<line x1="464.5" y1="354" x2="464.5" y2="359" stroke="#767670" />
<line x1="495.5" y1="354" x2="495.5" y2="359" stroke="#767670" />
<line x1="511.5" y1="354" x2="511.5" y2="359" stroke="#767670" />
<line x1="526.5" y1="354" x2="526.5" y2="359" stroke="#767670" />
<line x1="541.5" y1="354" x2="541.5" y2="359" stroke="#767670" />
<line x1="572.5" y1="354" x2="572.5" y2="359" stroke="#767670" />
<line x1="588.5" y1="354" x2="588.5" y2="359" stroke="#767670" />
<line x1="603.5" y1="354" x2="603.5" y2="359" stroke="#767670" />
<line x1="619.5" y1="354" x2="619.5" y2="359" stroke="#767670" />
<line x1="650.5" y1="354" x2="650.5" y2="359" stroke="#767670" />
<line x1="665.5" y1="354" x2="665.5" y2="359" stroke="#767670" />
<line x1="680.5" y1="354" x2="680.5" y2="359" stroke="#767670" />
<line x1="696.5" y1="354" x2="696.5" y2="359" stroke="#767670" />
<line x1="727.5" y1="354" x2="727.5" y2="359" stroke="#767670" />
<line x1="742.5" y1="354" x2="742.5" y2="359" stroke="#767670" />
<line x1="758.5" y1="354" x2="758.5" y2="359" stroke="#767670" />
<line x1="773.5" y1="354" x2="773.5" y2="359" stroke="#767670" />
<rect x="32" y="292" width="1" height="1" fill="#7c7a76"/>
<rect x="47" y="292" width="1" height="1" fill="#7c7a76"/>
<rect x="63" y="292" width="1" height="1" fill="#7c7a76"/>
<rect x="78" y="292" width="1" height="1" fill="#7c7a76"/>
<rect x="109" y="292" width="1" height="1" fill="#7c7a76"/>
<rect x="125" y="292" width="1" height="1" fill="#7c7a76"/>
<rect x="140" y="292" width="1" height="1" fill="#7c7a76"/>
<rect x="155" y="292" width="1" height="1" fill="#7c7a76"/>
<rect x="186" y="292" width="1" height="1" fill="#7c7a76"/>
<rect x="202" y="292" width="1" height="1" fill="#7c7a76"/>
<rect x="217" y="292" width="1" height="1" fill="#7c7a76"/>
<rect x="233" y="292" width="1" height="1" fill="#7c7a76"/>
<rect x="264" y="292" width="1" height="1" fill="#7c7a76"/>
<rect x="279" y="292" width="1" height="1" fill="#7c7a76"/>
<rect x="294" y="292" width="1" height="1" fill="#7c7a76"/>
<rect x="310" y="292" width="1" height="1" fill="#7c7a76"/>
<rect x="341" y="292" width="1" height="1" fill="#7c7a76"/>
<rect x="356" y="292" width="1" height="1" fill="#7c7a76"/>
<rect x="372" y="292" width="1" height="1" fill="#7c7a76"/>
<rect x="387" y="292" width="1" height="1" fill="#7c7a76"/>
<rect x="418" y="292" width="1" height="1" fill="#7c7a76"/>
<rect x="433" y="292" width="1" height="1" fill="#7c7a76"/>
<rect x="449" y="292" width="1" height="1" fill="#7c7a76"/>
<rect x="464" y="292" width="1" height="1" fill="#7c7a76"/>
<rect x="495" y="292" width="1" height="1" fill="#7c7a76"/>
<rect x="511" y="292" width="1" height="1" fill="#7c7a76"/>
<rect x="526" y="292" width="1" height="1" fill="#7c7a76"/>
<rect x="541" y="292" width="1" height="1" fill="#7c7a76"/>
<rect x="572" y="292" width="1" height="1" fill="#7c7a76"/>
<rect x="588" y="292" width="1" height="1" fill="#7c7a76"/>
<rect x="603" y="292" width="1" height="1" fill="#7c7a76"/>
<rect x="619" y="292" width="1" height="1" fill="#7c7a76"/>
<rect x="650" y="292" width="1" height="1" fill="#7c7a76"/>
<rect x="665" y="292" width="1" height="1" fill="#7c7a76"/>
<rect x="680" y="292" width="1" height="1" fill="#7c7a76"/>
<rect x="696" y="292" width="1" height="1" fill="#7c7a76"/>
<rect x="727" y="292" width="1" height="1" fill="#7c7a76"/>
<rect x="742" y="292" width="1" height="1" fill="#7c7a76"/>
<rect x="758" y="292" width="1" height="1" fill="#7c7a76"/>
<rect x="773" y="292" width="1" height="1" fill="#7c7a76"/>
<rect x="32" y="419" width="1" height="1" fill="#7c7a76"/>
<rect x="47" y="419" width="1" height="1" fill="#7c7a76"/>
<rect x="63" y="419" width="1" height="1" fill="#7c7a76"/>
<rect x="78" y="419" width="1" height="1" fill="#7c7a76"/>
<rect x="109" y="419" width="1" height="1" fill="#7c7a76"/>
<rect x="125" y="419" width="1" height="1" fill="#7c7a76"/>
<rect x="140" y="419" width="1" height="1" fill="#7c7a76"/>
<rect x="155" y="419" width="1" height="1" fill="#7c7a76"/>
<rect x="186" y="419" width="1" height="1" fill="#7c7a76"/>
<rect x="202" y="419" width="1" height="1" fill="#7c7a76"/>
<rect x="217" y="419" width="1" height="1" fill="#7c7a76"/>
<rect x="233" y="419" width="1" height="1" fill="#7c7a76"/>
<rect x="264" y="419" width="1" height="1" fill="#7c7a76"/>
<rect x="279" y="419" width="1" height="1" fill="#7c7a76"/>
<rect x="294" y="419" width="1" height="1" fill="#7c7a76"/>
<rect x="310" y="419" width="1" height="1" fill="#7c7a76"/>
<rect x="341" y="419" width="1" height="1" fill="#7c7a76"/>
<rect x="356" y="419" width="1" height="1" fill="#7c7a76"/>
<rect x="372" y="419" width="1" height="1" fill="#7c7a76"/>
<rect x="387" y="419" width="1" height="1" fill="#7c7a76"/>
<rect x="418" y="419" width="1" height="1" fill="#7c7a76"/>
<rect x="433" y="419" width="1" height="1" fill="#7c7a76"/>
<rect x="449" y="419" width="1" height="1" fill="#7c7a76"/>
<rect x="464" y="419" width="1" height="1" fill="#7c7a76"/>
<rect x="495" y="419" width="1" height="1" fill="#7c7a76"/>
<rect x="511" y="419" width="1" height="1" fill="#7c7a76"/>
<rect x="526" y="419" width="1" height="1" fill="#7c7a76"/>
<rect x="541" y="419" width="1" height="1" fill="#7c7a76"/>
<rect x="572" y="419" width="1" height="1" fill="#7c7a76"/>
<rect x="588" y="419" width="1" height="1" fill="#7c7a76"/>
<rect x="603" y="419" width="1" height="1" fill="#7c7a76"/>
<rect x="619" y="419" width="1" height="1" fill="#7c7a76"/>
<rect x="650" y="419" width="1" height="1" fill="#7c7a76"/>
<rect x="665" y="419" width="1" height="1" fill="#7c7a76"/>
<rect x="680" y="419" width="1" height="1" fill="#7c7a76"/>
<rect x="696" y="419" width="1" height="1" fill="#7c7a76"/>
<rect x="727" y="419" width="1" height="1" fill="#7c7a76"/>
<rect x="742" y="419" width="1" height="1" fill="#7c7a76"/>
<rect x="758" y="419" width="1" height="1" fill="#7c7a76"/>
<rect x="773" y="419" width="1" height="1" fill="#7c7a76"/>
<line x1="17" y1="362.5" x2="789" y2="362.5" stroke="#7080ff" stroke-dasharray="3,3" />
<line x1="17" y1="377.5" x2="789" y2="377.5" stroke="#7080ff" stroke-dasharray="3,3" />
</g>
<defs><path id="wb" d="M17.0,368.1L17.5,368.5L18.0,367.9L18.5,368.4L19.0,368.1L19.5,367.9L20.0,367.9L20.5,368.4L21.0,368.2L21.5,368.0L22.0,368.2L22.5,368.5L23.0,368.0L23.5,368.2L24.0,367.9L24.5,368.0L25.0,368.4L25.5,368.3L26.0,368.0L26.5,367.9L27.0,367.9L27.5,368.3L28.0,368.2L28.5,368.0L29.0,368.0L29.5,368.3L30.0,368.3L30.5,368.4L31.0,368.3L31.5,368.0L32.0,367.9L32.5,368.4L33.0,368.1L33.5,368.4L34.0,367.9L34.5,368.4L35.0,368.1L35.5,368.4L36.0,368.5L36.5,368.2L37.0,367.9L37.5,368.5L38.0,368.2L38.5,368.5L39.0,368.0L39.5,368.0L40.0,368.4L40.5,368.1L41.0,368.0L41.5,368.1L42.0,368.3L42.5,367.9L43.0,368.2L43.5,368.2L44.0,368.2L44.5,367.9L45.0,368.4L45.5,368.4L46.0,368.5L46.5,368.1L47.0,368.3L47.5,368.1L48.0,368.4L48.5,367.9L49.0,368.5L49.5,368.5L50.0,368.2L50.5,368.2L51.0,368.2L51.5,368.2L52.0,367.9L52.5,368.5L53.0,368.0L53.5,368.0L54.0,367.9L54.5,368.0L55.0,368.4L55.5,367.9L56.0,367.9L56.5,368.3L57.0,368.0L57.5,367.9L58.0,368.3L58.5,368.3L59.0,368.2L59.5,368.3L60.0,367.9L60.5,368.5L61.0,368.4L61.5,367.9L62.0,367.9L62.5,368.2L63.0,368.2L63.5,368.0L64.0,367.9L64.5,368.1L65.0,367.9L65.5,368.3L66.0,368.5L66.5,368.0L67.0,368.3L67.5,368.4L68.0,368.0L68.5,368.4L69.0,368.5L69.5,368.1L70.0,368.1L70.5,368.4L71.0,368.2L71.5,368.1L72.0,368.5L72.5,368.4L73.0,368.1L73.5,368.0L74.0,368.1L74.5,368.2L75.0,368.5L75.5,368.4L76.0,368.5L76.5,368.4L77.0,368.4L77.5,367.9L78.0,368.2L78.5,368.5L79.0,368.5L79.5,368.0L80.0,368.1L80.5,368.3L81.0,368.1L81.5,368.2L82.0,367.9L82.5,368.2L83.0,368.2L83.5,367.9L84.0,367.9L84.5,368.5L85.0,368.4L85.5,368.5L86.0,368.3L86.5,368.4L87.0,368.5L87.5,368.5L88.0,367.9L88.5,368.3L89.0,368.0L89.5,368.3L90.0,368.0L90.5,368.2L91.0,368.5L91.5,368.3L92.0,368.0L92.5,368.2L93.0,368.2L93.5,368.5L94.0,368.1L94.5,368.1L95.0,368.3L95.5,367.9L96.0,368.3L96.5,367.6L97.0,366.2L97.5,364.4L98.0,362.9L98.5,361.9L99.0,360.0L99.5,358.9L100.0,357.3L100.5,355.8L101.0,354.8L101.5,353.2L102.0,352.3L102.5,351.1L103.0,350.6L103.5,350.3L104.0,349.5L104.5,349.1L105.0,348.7L105.5,348.2L106.0,348.2L106.5,347.8L107.0,347.7L107.5,347.5L108.0,347.3L108.5,347.1L109.0,346.9L109.5,346.8L110.0,347.0L110.5,346.8L111.0,346.9L111.5,346.5L112.0,346.7L112.5,347.0L113.0,346.5L113.5,346.7L114.0,346.7L114.5,346.5L115.0,347.0L115.5,346.5L116.0,346.8L116.5,346.4L117.0,346.3L117.5,346.9L118.0,346.6L118.5,346.3L119.0,346.5L119.5,346.6L120.0,346.8L120.5,346.3L121.0,346.4L121.5,346.9L122.0,346.8L122.5,346.4L123.0,346.5L123.5,346.5L124.0,346.7L124.5,346.7L125.0,346.8L125.5,346.8L126.0,346.6L126.5,346.8L127.0,346.8L127.5,346.8L128.0,346.6L128.5,346.8L129.0,346.7L129.5,346.9L130.0,346.3L130.5,346.9L131.0,346.3L131.5,346.8L132.0,346.7L132.5,346.6L133.0,346.9L133.5,346.7L134.0,346.5L134.5,346.8L135.0,346.9L135.5,346.7L136.0,346.5L136.5,346.6L137.0,346.6L137.5,346.8L138.0,346.5L138.5,346.5L139.0,346.6L139.5,346.5L140.0,346.5L140.5,346.8L141.0,346.8L141.5,346.6L142.0,346.6L142.5,346.4L143.0,346.5L143.5,346.4L144.0,346.7L144.5,346.7L145.0,346.3L145.5,346.9L146.0,346.5L146.5,346.8L147.0,346.8L147.5,346.9L148.0,346.4L148.5,346.5L149.0,346.9L149.5,346.3L150.0,346.3L150.5,346.6L151.0,346.6L151.5,346.9L152.0,346.8L152.5,346.6L153.0,346.9L153.5,346.6L154.0,346.6L154.5,348.6L155.0,351.7L155.5,354.9L156.0,357.2L156.5,360.3L157.0,362.9L157.5,365.9L158.0,368.0L158.5,370.9L159.0,374.3L159.5,376.3L160.0,378.8L160.5,380.2L161.0,382.2L161.5,383.7L162.0,384.1L162.5,385.1L163.0,385.8L163.5,386.8L164.0,387.0L164.5,387.4L165.0,388.1L165.5,387.9L166.0,388.3L166.5,389.0L167.0,389.0L167.5,389.0L168.0,388.8L168.5,389.5L169.0,389.4L169.5,389.6L170.0,389.8L170.5,389.8L171.0,389.5L171.5,389.3L172.0,389.5L172.5,389.7L173.0,389.7L173.5,389.5L174.0,389.5L174.5,389.8L175.0,389.8L175.5,389.6L176.0,390.1L176.5,389.9L177.0,389.4L177.5,389.7L178.0,390.0L178.5,389.6L179.0,389.9L179.5,389.4L180.0,389.7L180.5,390.0L181.0,389.9L181.5,389.9L182.0,389.6L182.5,389.8L183.0,389.8L183.5,389.6L184.0,389.9L184.5,389.8L185.0,390.1L185.5,389.9L186.0,389.7L186.5,389.5L187.0,389.6L187.5,390.0L188.0,389.5L188.5,389.5L189.0,389.6L189.5,389.8L190.0,390.0L190.5,389.9L191.0,390.0L191.5,389.5L192.0,389.5L192.5,390.0L193.0,389.7L193.5,390.0L194.0,389.7L194.5,389.6L195.0,389.6L195.5,389.5L196.0,390.1L196.5,389.9L197.0,389.7L197.5,389.8L198.0,389.7L198.5,389.5L199.0,390.1L199.5,389.9L200.0,390.1L200.5,389.8L201.0,389.9L201.5,389.6L202.0,389.5L202.5,390.1L203.0,390.0L203.5,389.7L204.0,390.1L204.5,390.0L205.0,389.7L205.5,389.9L206.0,390.1L206.5,389.8L207.0,390.1L207.5,389.6L208.0,389.7L208.5,390.0L209.0,389.6L209.5,389.7L210.0,390.1L210.5,389.8L211.0,390.0L211.5,389.6L212.0,389.6L212.5,389.7L213.0,389.6L213.5,390.1L214.0,389.7L214.5,389.8L215.0,389.5L215.5,389.8L216.0,389.7L216.5,389.7L217.0,389.5L217.5,389.5L218.0,390.0L218.5,389.7L219.0,389.6L219.5,389.6L220.0,389.6L220.5,389.6L221.0,389.5L221.5,389.9L222.0,389.7L222.5,389.6L223.0,389.9L223.5,389.5L224.0,389.6L224.5,390.0L225.0,389.5L225.5,389.8L226.0,390.0L226.5,390.0L227.0,389.6L227.5,389.7L228.0,390.0L228.5,389.7L229.0,390.1L229.5,389.6L230.0,390.1L230.5,389.8L231.0,389.6L231.5,388.9L232.0,385.5L232.5,383.7L233.0,380.2L233.5,377.4L234.0,375.0L234.5,371.6L235.0,369.4L235.5,366.4L236.0,362.9L236.5,361.3L237.0,358.1L237.5,356.9L238.0,355.1L238.5,353.4L239.0,352.8L239.5,351.5L240.0,351.0L240.5,350.2L241.0,349.4L241.5,349.1L242.0,348.4L242.5,348.2L243.0,348.3L243.5,347.8L244.0,347.8L244.5,347.2L245.0,347.4L245.5,347.1L246.0,347.1L246.5,346.9L247.0,346.7L247.5,346.8L248.0,346.7L248.5,346.6L249.0,346.9L249.5,346.6L250.0,346.7L250.5,347.0L251.0,348.8L251.5,352.1L252.0,355.3L252.5,356.9L253.0,360.3L253.5,362.3L254.0,365.9L254.5,368.1L255.0,371.1L255.5,374.4L256.0,376.5L256.5,378.9L257.0,380.0L257.5,382.1L258.0,383.2L258.5,384.2L259.0,384.9L259.5,385.5L260.0,386.8L260.5,387.2L261.0,387.6L261.5,387.5L262.0,387.8L262.5,388.2L263.0,388.4L263.5,388.7L264.0,388.9L264.5,388.8L265.0,389.1L265.5,389.4L266.0,389.2L266.5,389.7L267.0,389.5L267.5,389.7L268.0,389.4L268.5,389.6L269.0,389.8L269.5,389.6L270.0,388.5L270.5,387.0L271.0,383.7L271.5,380.1L272.0,377.8L272.5,375.1L273.0,372.8L273.5,369.2L274.0,366.1L274.5,363.8L275.0,361.2L275.5,359.0L276.0,357.2L276.5,355.8L277.0,353.7L277.5,352.8L278.0,351.8L278.5,351.1L279.0,350.6L279.5,349.6L280.0,348.9L280.5,349.1L281.0,348.4L281.5,348.5L282.0,348.0L282.5,347.8L283.0,347.8L283.5,347.5L284.0,347.2L284.5,346.8L285.0,347.2L285.5,346.9L286.0,346.9L286.5,347.2L287.0,346.6L287.5,347.0L288.0,346.4L288.5,346.9L289.0,346.9L289.5,348.4L290.0,350.8L290.5,354.3L291.0,357.3L291.5,359.4L292.0,362.4L292.5,364.4L293.0,367.9L293.5,371.2L294.0,373.2L294.5,376.2L295.0,377.8L295.5,380.3L296.0,382.0L296.5,382.7L297.0,384.0L297.5,384.9L298.0,385.7L298.5,386.6L299.0,386.8L299.5,387.3L300.0,388.0L300.5,387.8L301.0,388.4L301.5,388.5L302.0,389.0L302.5,389.0L303.0,389.3L303.5,388.9L304.0,389.4L304.5,389.4L305.0,389.4L305.5,389.7L306.0,389.8L306.5,389.3L307.0,389.5L307.5,389.5L308.0,389.5L308.5,389.4L309.0,386.6L309.5,384.4L310.0,381.5L310.5,378.1L311.0,375.7L311.5,372.6L312.0,370.6L312.5,367.2L313.0,363.9L313.5,361.7L314.0,358.8L314.5,358.0L315.0,355.8L315.5,353.7L316.0,353.2L316.5,352.2L317.0,351.3L317.5,350.1L318.0,349.9L318.5,349.3L319.0,348.6L319.5,348.6L320.0,347.8L320.5,348.3L321.0,347.8L321.5,347.6L322.0,347.7L322.5,347.4L323.0,347.0L323.5,346.9L324.0,346.7L324.5,346.6L325.0,347.1L325.5,347.1L326.0,346.7L326.5,346.5L327.0,346.8L327.5,347.0L328.0,347.0L328.5,346.5L329.0,346.9L329.5,346.9L330.0,346.8L330.5,346.5L331.0,346.4L331.5,346.9L332.0,346.5L332.5,346.5L333.0,346.7L333.5,346.5L334.0,346.8L334.5,346.4L335.0,346.3L335.5,346.7L336.0,346.7L336.5,346.8L337.0,346.7L337.5,346.9L338.0,346.9L338.5,346.6L339.0,346.6L339.5,346.4L340.0,346.5L340.5,346.7L341.0,346.3L341.5,346.7L342.0,346.4L342.5,346.6L343.0,346.9L343.5,346.3L344.0,346.3L344.5,346.6L345.0,346.4L345.5,346.8L346.0,346.3L346.5,346.8L347.0,346.8L347.5,348.7L348.0,351.7L348.5,354.8L349.0,357.3L349.5,360.4L350.0,362.5L350.5,365.7L351.0,367.9L351.5,371.3L352.0,374.6L352.5,376.6L353.0,378.5L353.5,380.0L354.0,381.9L354.5,383.4L355.0,384.0L355.5,385.0L356.0,385.5L356.5,386.4L357.0,387.1L357.5,387.7L358.0,388.1L358.5,388.4L359.0,388.7L359.5,389.0L360.0,388.9L360.5,389.2L361.0,388.8L361.5,389.3L362.0,389.4L362.5,389.2L363.0,389.5L363.5,389.8L364.0,389.5L364.5,389.7L365.0,389.5L365.5,389.5L366.0,389.9L366.5,388.5L367.0,386.5L367.5,383.6L368.0,380.2L368.5,377.8L369.0,375.0L369.5,372.6L370.0,369.6L370.5,366.2L371.0,364.1L371.5,361.0L372.0,359.1L372.5,356.6L373.0,355.4L373.5,354.3L374.0,352.7L374.5,351.6L375.0,351.2L375.5,350.2L376.0,349.4L376.5,349.2L377.0,348.7L377.5,348.4L378.0,348.2L378.5,347.7L379.0,347.7L379.5,347.3L380.0,347.4L380.5,347.3L381.0,346.9L381.5,347.0L382.0,346.7L382.5,346.9L383.0,347.1L383.5,346.9L384.0,347.0L384.5,346.9L385.0,346.5L385.5,347.1L386.0,348.8L386.5,350.5L387.0,354.2L387.5,357.1L388.0,359.1L388.5,362.9L389.0,364.8L389.5,368.2L390.0,371.0L390.5,373.6L391.0,376.0L391.5,377.8L392.0,380.1L392.5,381.6L393.0,383.0L393.5,383.9L394.0,384.7L394.5,385.9L395.0,386.2L395.5,387.2L396.0,387.5L396.5,388.0L397.0,388.1L397.5,388.6L398.0,388.8L398.5,388.6L399.0,389.1L399.5,389.0L400.0,389.4L400.5,389.4L401.0,389.6L401.5,389.2L402.0,389.4L402.5,389.7L403.0,389.9L403.5,389.8L404.0,389.3L404.5,389.7L405.0,389.4L405.5,386.8L406.0,384.8L406.5,381.1L407.0,378.4L407.5,376.1L408.0,372.6L408.5,370.4L409.0,367.3L409.5,364.3L410.0,362.0L410.5,358.9L411.0,357.3L411.5,355.3L412.0,354.2L412.5,352.8L413.0,351.9L413.5,351.1L414.0,350.5L414.5,349.8L415.0,349.1L415.5,349.1L416.0,348.6L416.5,348.3L417.0,348.2L417.5,348.1L418.0,347.2L418.5,347.3L419.0,347.0L419.5,347.2L420.0,347.3L420.5,347.2L421.0,346.6L421.5,346.7L422.0,347.1L422.5,346.9L423.0,346.7L423.5,346.7L424.0,346.5L424.5,347.8L425.0,350.7L425.5,353.2L426.0,356.2L426.5,359.1L427.0,361.4L427.5,364.5L428.0,367.2L428.5,370.2L429.0,373.0L429.5,375.2L430.0,377.9L430.5,379.5L431.0,381.4L431.5,382.8L432.0,383.7L432.5,384.5L433.0,385.5L433.5,386.1L434.0,386.6L434.5,387.2L435.0,388.1L435.5,387.7L436.0,388.1L436.5,388.6L437.0,388.6L437.5,388.8L438.0,389.0L438.5,389.0L439.0,389.3L439.5,389.4L440.0,389.8L440.5,389.8L441.0,389.2L441.5,389.6L442.0,389.8L442.5,389.9L443.0,389.9L443.5,389.8L444.0,389.8L444.5,389.6L445.0,389.6L445.5,389.9L446.0,390.0L446.5,390.1L447.0,389.9L447.5,389.6L448.0,390.0L448.5,389.9L449.0,389.8L449.5,389.9L450.0,389.7L450.5,389.8L451.0,389.7L451.5,389.5L452.0,389.7L452.5,389.7L453.0,390.1L453.5,389.8L454.0,389.7L454.5,389.6L455.0,389.6L455.5,389.7L456.0,389.5L456.5,389.5L457.0,390.1L457.5,389.8L458.0,389.8L458.5,389.8L459.0,389.7L459.5,389.6L460.0,389.5L460.5,389.7L461.0,389.7L461.5,390.0L462.0,389.8L462.5,390.1L463.0,388.9L463.5,387.1L464.0,383.6L464.5,380.0L465.0,377.9L465.5,375.0L466.0,373.1L466.5,369.4L467.0,366.5L467.5,364.1L468.0,361.3L468.5,358.9L469.0,356.9L469.5,355.9L470.0,353.8L470.5,352.5L471.0,351.6L471.5,350.7L472.0,350.2L472.5,349.9L473.0,348.9L473.5,348.8L474.0,348.2L474.5,348.3L475.0,348.2L475.5,347.8L476.0,347.3L476.5,347.5L477.0,347.6L477.5,347.2L478.0,346.8L478.5,347.2L479.0,347.2L479.5,346.8L480.0,346.6L480.5,346.6L481.0,346.8L481.5,347.0L482.0,346.8L482.5,348.9L483.0,350.6L483.5,353.9L484.0,357.4L484.5,359.5L485.0,362.5L485.5,364.9L486.0,367.9L486.5,370.9L487.0,373.3L487.5,376.0L488.0,378.1L488.5,380.0L489.0,381.9L489.5,383.0L490.0,384.0L490.5,384.8L491.0,385.4L491.5,386.6L492.0,386.9L492.5,387.8L493.0,387.4L493.5,388.2L494.0,388.5L494.5,388.5L495.0,388.5L495.5,388.7L496.0,388.8L496.5,389.4L497.0,389.0L497.5,389.6L498.0,389.4L498.5,389.5L499.0,389.6L499.5,389.6L500.0,389.7L500.5,389.7L501.0,389.6L501.5,389.9L502.0,386.6L502.5,384.7L503.0,381.5L503.5,378.3L504.0,375.8L504.5,372.9L505.0,370.9L505.5,367.3L506.0,364.0L506.5,362.0L507.0,359.5L507.5,357.4L508.0,355.3L508.5,354.0L509.0,353.2L509.5,352.1L510.0,351.1L510.5,350.7L511.0,349.7L511.5,349.5L512.0,348.5L512.5,348.2L513.0,347.9L513.5,347.7L514.0,347.7L514.5,347.6L515.0,347.2L515.5,347.6L516.0,347.1L516.5,346.8L517.0,346.8L517.5,347.1L518.0,347.2L518.5,346.6L519.0,346.5L519.5,347.0L520.0,346.6L520.5,347.1L521.0,347.5L521.5,350.8L522.0,352.8L522.5,356.3L523.0,359.3L523.5,361.4L524.0,365.0L524.5,366.6L525.0,370.3L525.5,373.1L526.0,375.5L526.5,378.0L527.0,379.7L527.5,381.1L528.0,382.9L528.5,383.7L529.0,385.1L529.5,385.8L530.0,386.3L530.5,386.7L531.0,387.1L531.5,387.6L532.0,387.9L532.5,388.1L533.0,388.3L533.5,388.9L534.0,389.0L534.5,388.9L535.0,389.5L535.5,389.1L536.0,389.4L536.5,389.2L537.0,389.7L537.5,389.8L538.0,389.4L538.5,389.8L539.0,389.9L539.5,389.5L540.0,389.6L540.5,387.8L541.0,384.8L541.5,381.1L542.0,379.3L542.5,376.0L543.0,373.8L543.5,370.6L544.0,368.7L544.5,365.0L545.0,362.2L545.5,360.0L546.0,357.8L546.5,356.5L547.0,354.3L547.5,353.3L548.0,352.6L548.5,351.1L549.0,350.3L549.5,349.6L550.0,349.6L550.5,348.6L551.0,348.8L551.5,348.1L552.0,348.2L552.5,347.5L553.0,347.4L553.5,347.5L554.0,347.0L554.5,347.1L555.0,347.4L555.5,347.2L556.0,347.2L556.5,347.2L557.0,346.5L557.5,346.6L558.0,347.0L558.5,346.9L559.0,346.4L559.5,347.5L560.0,349.5L560.5,352.9L561.0,355.9L561.5,357.9L562.0,361.9L562.5,363.5L563.0,367.2L563.5,369.9L564.0,372.3L564.5,375.2L565.0,377.2L565.5,379.3L566.0,380.9L566.5,382.2L567.0,383.9L567.5,384.5L568.0,385.2L568.5,385.9L569.0,386.7L569.5,387.6L570.0,387.5L570.5,387.8L571.0,388.5L571.5,388.8L572.0,388.9L572.5,388.7L573.0,388.8L573.5,389.0L574.0,388.9L574.5,389.0L575.0,389.4L575.5,389.4L576.0,389.6L576.5,389.5L577.0,389.3L577.5,389.8L578.0,389.8L578.5,389.7L579.0,387.8L579.5,385.8L580.0,382.8L580.5,379.5L581.0,377.2L581.5,373.7L582.0,371.5L582.5,368.4L583.0,365.5L583.5,363.0L584.0,360.0L584.5,358.3L585.0,356.0L585.5,354.8L586.0,353.2L586.5,352.3L587.0,351.8L587.5,350.5L588.0,350.2L588.5,349.4L589.0,348.8L589.5,348.5L590.0,348.0L590.5,348.3L591.0,348.0L591.5,347.9L592.0,347.2L592.5,347.5L593.0,347.1L593.5,347.2L594.0,347.1L594.5,346.8L595.0,347.2L595.5,346.5L596.0,347.0L596.5,347.0L597.0,346.8L597.5,346.8L598.0,347.1L598.5,346.5L599.0,346.8L599.5,346.8L600.0,346.6L600.5,346.8L601.0,346.6L601.5,346.7L602.0,346.7L602.5,346.7L603.0,346.5L603.5,346.7L604.0,346.6L604.5,346.4L605.0,346.7L605.5,346.4L606.0,346.9L606.5,346.6L607.0,346.8L607.5,346.6L608.0,346.6L608.5,346.4L609.0,346.4L609.5,346.9L610.0,346.6L610.5,346.6L611.0,346.6L611.5,346.8L612.0,346.4L612.5,346.4L613.0,346.8L613.5,346.6L614.0,346.7L614.5,346.8L615.0,346.9L615.5,346.9L616.0,346.3L616.5,346.5L617.0,346.8L617.5,347.7L618.0,350.4L618.5,352.6L619.0,355.9L619.5,359.0L620.0,361.4L620.5,364.9L621.0,366.9L621.5,370.1L622.0,373.1L622.5,375.3L623.0,378.4L623.5,379.6L624.0,381.3L624.5,382.9L625.0,384.0L625.5,385.0L626.0,385.2L626.5,386.4L627.0,386.8L627.5,387.3L628.0,387.5L628.5,387.9L629.0,388.2L629.5,388.4L630.0,388.4L630.5,388.7L631.0,389.1L631.5,388.9L632.0,389.0L632.5,389.5L633.0,389.3L633.5,389.4L634.0,389.4L634.5,389.8L635.0,389.3L635.5,389.7L636.0,389.9L636.5,389.5L637.0,389.6L637.5,389.9L638.0,389.8L638.5,389.7L639.0,389.4L639.5,389.7L640.0,389.7L640.5,389.9L641.0,389.6L641.5,389.7L642.0,389.9L642.5,390.0L643.0,389.7L643.5,389.7L644.0,389.8L644.5,390.1L645.0,389.6L645.5,390.1L646.0,389.9L646.5,389.7L647.0,389.9L647.5,389.7L648.0,389.5L648.5,390.0L649.0,389.7L649.5,389.8L650.0,389.8L650.5,390.1L651.0,390.0L651.5,389.5L652.0,389.9L652.5,389.8L653.0,389.8L653.5,390.0L654.0,389.7L654.5,389.8L655.0,390.1L655.5,389.8L656.0,389.0L656.5,386.8L657.0,383.8L657.5,380.5L658.0,378.3L658.5,374.9L659.0,372.5L659.5,369.7L660.0,366.3L660.5,364.3L661.0,361.2L661.5,358.9L662.0,356.7L662.5,355.3L663.0,354.2L663.5,352.4L664.0,351.6L664.5,351.1L665.0,350.4L665.5,349.4L666.0,349.3L666.5,349.0L667.0,348.4L667.5,347.9L668.0,348.0L668.5,347.6L669.0,347.6L669.5,347.7L670.0,347.5L670.5,347.4L671.0,346.8L671.5,346.9L672.0,346.9L672.5,346.5L673.0,347.2L673.5,346.6L674.0,346.6L674.5,346.6L675.0,346.5L675.5,348.9L676.0,350.8L676.5,354.0L677.0,357.1L677.5,359.0L678.0,362.5L678.5,365.0L679.0,368.2L679.5,371.5L680.0,373.2L680.5,376.1L681.0,377.7L681.5,380.2L682.0,381.8L682.5,382.9L683.0,384.1L683.5,384.9L684.0,385.7L684.5,386.5L685.0,386.7L685.5,387.7L686.0,387.8L686.5,387.8L687.0,388.2L687.5,388.6L688.0,388.7L688.5,389.0L689.0,389.0L689.5,389.0L690.0,389.5L690.5,389.2L691.0,389.6L691.5,389.7L692.0,389.6L692.5,389.6L693.0,389.9L693.5,389.6L694.0,389.9L694.5,389.4L695.0,386.7L695.5,384.7L696.0,381.0L696.5,378.4L697.0,375.7L697.5,372.8L698.0,370.4L698.5,367.6L699.0,364.2L699.5,362.2L700.0,359.2L700.5,357.7L701.0,355.7L701.5,353.8L702.0,352.9L702.5,352.1L703.0,351.0L703.5,350.7L704.0,349.7L704.5,349.0L705.0,348.5L705.5,348.7L706.0,348.5L706.5,347.9L707.0,347.9L707.5,347.4L708.0,347.7L708.5,347.4L709.0,346.9L709.5,346.8L710.0,347.1L710.5,346.6L711.0,347.1L711.5,346.7L712.0,346.6L712.5,346.8L713.0,346.6L713.5,346.8L714.0,347.3L714.5,351.0L715.0,352.8L715.5,356.4L716.0,359.1L716.5,361.7L717.0,365.1L717.5,366.8L718.0,369.8L718.5,373.3L719.0,375.5L719.5,377.8L720.0,379.5L720.5,381.1L721.0,382.9L721.5,383.9L722.0,384.8L722.5,385.6L723.0,386.0L723.5,387.1L724.0,387.0L724.5,388.0L725.0,388.3L725.5,388.6L726.0,388.5L726.5,388.6L727.0,388.8L727.5,389.2L728.0,389.2L728.5,389.6L729.0,389.1L729.5,389.4L730.0,389.7L730.5,389.6L731.0,389.6L731.5,389.3L732.0,389.4L732.5,389.5L733.0,390.0L733.5,388.0L734.0,384.4L734.5,381.6L735.0,378.9L735.5,376.0L736.0,374.1L736.5,370.5L737.0,368.7L737.5,365.3L738.0,361.7L738.5,359.9L739.0,357.6L739.5,356.1L740.0,354.7L740.5,352.8L741.0,352.5L741.5,351.1L742.0,350.4L742.5,350.0L743.0,349.0L743.5,349.0L744.0,348.7L744.5,348.4L745.0,348.0L745.5,347.4L746.0,347.6L746.5,347.1L747.0,347.4L747.5,346.9L748.0,347.2L748.5,346.9L749.0,346.9L749.5,347.0L750.0,346.6L750.5,346.6L751.0,347.1L751.5,346.6L752.0,347.0L752.5,347.8L753.0,349.7L753.5,352.7L754.0,355.8L754.5,358.5L755.0,361.2L755.5,363.7L756.0,366.9L756.5,369.9L757.0,372.3L757.5,375.2L758.0,377.2L758.5,379.5L759.0,380.7L759.5,382.2L760.0,383.7L760.5,384.3L761.0,385.2L761.5,385.8L762.0,387.0L762.5,387.3L763.0,387.8L763.5,387.6L764.0,388.5L764.5,388.5L765.0,388.9L765.5,388.9L766.0,389.2L766.5,388.9L767.0,389.4L767.5,389.1L768.0,389.2L768.5,389.1L769.0,389.4L769.5,389.6L770.0,389.5L770.5,389.9L771.0,389.4L771.5,389.7L772.0,387.6L772.5,385.7L773.0,382.6L773.5,379.3L774.0,376.7L774.5,373.6L775.0,371.7L775.5,368.8L776.0,364.9L776.5,363.1L777.0,360.2L777.5,358.6L778.0,356.1L778.5,354.7L779.0,353.5L779.5,352.6L780.0,351.2L780.5,351.0L781.0,350.1L781.5,349.4L782.0,348.7L782.5,348.5L783.0,348.5L783.5,348.2L784.0,347.6L784.5,347.5L785.0,347.2L785.5,347.1L786.0,347.0L786.5,347.0L787.0,347.4L787.5,347.3L788.0,347.1L788.5,346.8L789.0,346.8L789.5,347.0" fill="none" stroke-linejoin="round" shape-rendering="crispEdges"/></defs>
<clipPath id="cz0"><rect x="17" y="255" width="84.5" height="202"/></clipPath>
<use href="#wb" clip-path="url(#cz0)" stroke="#ff0a80" stroke-width="3.0"/>
<clipPath id="cz1"><rect x="101.5" y="255" width="115.0" height="202"/></clipPath>
<use href="#wb" clip-path="url(#cz1)" stroke="#ff66ee" stroke-width="2.3"/>
<clipPath id="cz2"><rect x="216.5" y="255" width="191.5" height="202"/></clipPath>
<use href="#wb" clip-path="url(#cz2)" stroke="#ff38c0" stroke-width="2.3"/>
<clipPath id="cz3"><rect x="408" y="255" width="40" height="202"/></clipPath>
<use href="#wb" clip-path="url(#cz3)" stroke="#ff48e0" stroke-width="2.3"/>
<clipPath id="cz4"><rect x="448" y="255" width="193" height="202"/></clipPath>
<use href="#wb" clip-path="url(#cz4)" stroke="#ff38c0" stroke-width="2.3"/>
<clipPath id="cz5"><rect x="641" y="255" width="148.5" height="202"/></clipPath>
<use href="#wb" clip-path="url(#cz5)" stroke="#ff60cc" stroke-width="2.3"/>
<text class="w" x="444.5" y="280.6" font-size="10.5" fill="#fff" text-anchor="middle" textLength="161" lengthAdjust="spacingAndGlyphs">Remote Terminal to Bus Controller</text>
<text class="w" x="445.5" y="295.6" font-size="10.5" fill="#fff" text-anchor="middle" >Transmit Command Word</text>
<text class="w" x="157.2" y="311" font-size="10.5" fill="#fff" text-anchor="middle" textLength="60" lengthAdjust="spacingAndGlyphs">Sync = 0x01</text>
<text class="w" x="311" y="311" font-size="10.5" fill="#fff" text-anchor="middle" textLength="94" lengthAdjust="spacingAndGlyphs">RT Address = 0x03</text>
<text class="w" x="427.5" y="311" font-size="10.5" fill="#fff" text-anchor="middle" >T</text>
<text class="w" x="544.2" y="311" font-size="10.5" fill="#fff" text-anchor="middle" textLength="123.5" lengthAdjust="spacingAndGlyphs">SubAddress/Mode = 0x01</text>
<text class="w" x="714.5" y="311" font-size="10.5" fill="#fff" text-anchor="middle" textLength="66" lengthAdjust="spacingAndGlyphs">DataCount = 1</text>
<text x="4.6" y="364.8" font-size="9.6" fill="#ff0a80" text-anchor="start" textLength="10.6" lengthAdjust="spacingAndGlyphs" stroke="#ff0a80" stroke-width="0.15">Z2</text>
<path d="M7.5,370.5V368.5H17" stroke="#ff0a80" fill="none" shape-rendering="crispEdges"/>
<path d="M791,462.5H798M795,459L798,462.5L795,466" stroke="#ff0a90" stroke-width="1.4" fill="none"/>
</svg>
<div id="tbl">
 <div id="mil"><span style="position:absolute;left:1px;top:0;word-spacing:-2px">MIL 1553</span></div>
 <div class="hs" style="top:15px"></div><div class="hs" style="top:31px"></div><div class="hs" style="top:47px"></div>
 <div class="vs" style="left:52px"></div><div class="vs" style="left:112px"></div><div class="vs" style="left:212px"></div>
 <div class="vs" style="left:422px"></div><div class="vs" style="left:472px"></div><div class="vs" style="left:582px"></div><div class="vs" style="left:632px"></div>
 <div class="h" style="left:54px">Time</div><div class="h" style="left:114px">Type</div><div class="h" style="left:214px">Summary</div>
 <div class="h" style="left:423px">Resp<span style="letter-spacing:0.6px">...</span></div><div class="h" style="left:473px">Data</div><div class="h" style="left:583px">IMG</div><div class="h" style="left:634px">Status</div>
 <div class="c r" style="left:0;width:50px">1</div>
 <div class="c r" style="left:54px;width:58px;word-spacing:2px">-27.0 µs</div>
 <div class="c" style="left:114px">RT-BC  (Xmit)</div>
 <div class="c" style="left:214px">RT  3 to BC: 1 DW</div>
 <div class="c r" style="left:424px;width:48px;word-spacing:1.6px">8.97 µs</div>
 <div class="c" style="left:474px">0x0002</div>
</div>

<div class="box" id="z2" style="left:4px;width:95px;border-color:#e0207c;background:radial-gradient(ellipse 150px 24px at 0% 106%,rgba(255,10,128,0.95) 0%,rgba(255,10,128,0.8) 25%,rgba(255,10,128,0.4) 55%,rgba(255,10,128,0) 100%),linear-gradient(to bottom,#6c7487 0,#4f5462 22px,#353841 24px,#3a3d47 44px);">
 <div style="left:2px;top:2px;width:18px;height:13px;background:#ff0a80;border-radius:2px;color:#000;text-align:center;line-height:13px">Z2</div>
 <div class="r" style="right:1px;top:2px;color:#000">zoom(M2)</div>
 <div class="r" style="right:-1px;top:17px">2.00 V/div</div>
 <div class="r" style="right:-1px;top:31px;word-spacing:0.5px">2.00 µs/div</div>
</div>
<div class="box" id="m2" style="left:104px;width:95px;background:linear-gradient(to bottom,#6c7487 0,#565c6b 23px,#3d414b 24px,#494d58 44px);">
 <div style="left:1px;top:1px;width:20px;height:13px;background:#ffa0c8;border-radius:2px;color:#000;text-align:center;line-height:13px">M2</div>
 <div class="r" style="right:0;top:17px">2.70 V/div</div>
 <div class="r" style="right:0;top:31px;word-spacing:0.5px">10.0 µs/div</div>
</div>
<div class="box" id="tb" style="left:583px;width:110px;background:linear-gradient(to bottom,#6c7487 0,#565c6b 23px,#3d414b 24px,#494d58 44px);">
 <div style="left:1px;top:1px;width:108px;height:13px;background:#fff;border-radius:3px 3px 0 0"></div>
 <div style="left:3px;top:1px;color:#000">Timebase</div>
 <div class="r" style="right:1px;top:1px;color:#000">0 ns</div>
 <div class="r" style="right:0;top:17px">50.0 ns/div</div>
 <div style="left:3px;top:31px">2.50 kS</div>
 <div class="r" style="right:1px;top:31px">5.0 GS/s</div>
</div>
<div class="box" id="tr" style="left:698px;width:95px;background:linear-gradient(to bottom,#6c7487 0,#565c6b 23px,#3d414b 24px,#494d58 44px);">
 <div style="left:1px;top:1px;width:93px;height:13px;background:#fff;border-radius:3px 3px 0 0"></div>
 <div style="left:3px;top:1px;color:#000">Trigger</div>
 <div style="left:56px;top:2px;width:18px;height:11px;background:#000;border-radius:3px;color:#fff;font-size:10.5px;line-height:11px;text-align:center">C1</div>
 <div style="left:75px;top:2px;width:19px;height:11px;background:#000;border-radius:3px;color:#fff;font-size:10.5px;line-height:11px;text-align:center">DC</div>
 <div style="left:3px;top:17px">Stop</div>
 <div class="r" style="right:0;top:17px">0.0 mV</div>
 <div style="left:3px;top:31px">Edge</div>
 <div class="r" style="right:0;top:31px">Positive</div>
</div>
<div id="date">12/16/2011 7:58:21 AM</div>
<div id="logo">LeCroy</div>
</div></body></html>
